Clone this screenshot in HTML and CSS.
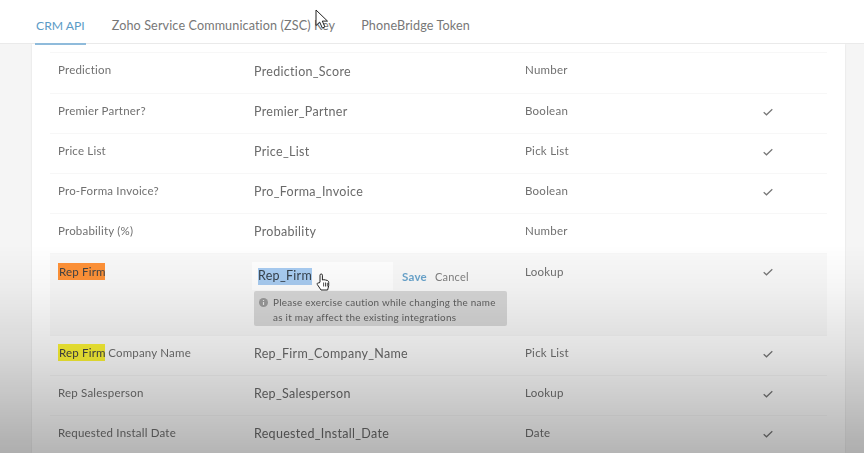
FILE: index.html
```html
<!DOCTYPE html>
<html lang="en">
<head>
<meta charset="utf-8">
<title>CRM API</title>
<link rel="stylesheet" href="styles.css">
</head>
<body>
<div class="page">
  <nav class="tabs">
    <a class="tab active">CRM API</a>
    <a class="tab">Zoho Service Communication (ZSC) Key</a>
    <a class="tab">PhoneBridge Token</a>
  </nav>
  <main class="card">
    <div class="table">
      <div class="row"><span class="label">Prediction</span><span class="api">Prediction_Score</span><span class="type">Number</span><span class="check"></span></div>
      <div class="row"><span class="label">Premier Partner?</span><span class="api">Premier_Partner</span><span class="type">Boolean</span><span class="check"><svg class="tick" viewBox="0 0 10 8"><path d="M.7 4.2 3.5 6.8 9.3 1.2"/></svg></span></div>
      <div class="row"><span class="label">Price List</span><span class="api">Price_List</span><span class="type">Pick List</span><span class="check"><svg class="tick" viewBox="0 0 10 8"><path d="M.7 4.2 3.5 6.8 9.3 1.2"/></svg></span></div>
      <div class="row"><span class="label">Pro-Forma Invoice?</span><span class="api">Pro_Forma_Invoice</span><span class="type">Boolean</span><span class="check"><svg class="tick" viewBox="0 0 10 8"><path d="M.7 4.2 3.5 6.8 9.3 1.2"/></svg></span></div>
      <div class="row"><span class="label">Probability (%)</span><span class="api">Probability</span><span class="type">Number</span><span class="check"></span></div>
      <div class="row editing">
        <span class="label"><mark class="hl-orange">Rep Firm</mark></span>
        <div class="editor">
          <div class="edit-line">
            <div class="input"><span class="selected">Rep_Firm</span></div>
            <a class="save">Save</a><a class="cancel">Cancel</a>
          </div>
          <div class="note">
            <svg class="info" viewBox="0 0 10 10"><circle cx="5" cy="5" r="5"/><path d="M5 2.2v1.2M5 4.500v3.300"/></svg>
            <p>Please exercise caution while changing the name<br>as it may affect the existing integrations</p>
          </div>
        </div>
        <span class="type">Lookup</span>
        <span class="check"><svg class="tick" viewBox="0 0 10 8"><path d="M.7 4.2 3.5 6.8 9.3 1.2"/></svg></span>
      </div>
      <div class="row"><span class="label"><mark class="hl-yellow">Rep Firm</mark> Company Name</span><span class="api">Rep_Firm_Company_Name</span><span class="type">Pick List</span><span class="check"><svg class="tick" viewBox="0 0 10 8"><path d="M.7 4.2 3.5 6.8 9.3 1.2"/></svg></span></div>
      <div class="row"><span class="label">Rep Salesperson</span><span class="api">Rep_Salesperson</span><span class="type">Lookup</span><span class="check"><svg class="tick" viewBox="0 0 10 8"><path d="M.7 4.2 3.5 6.8 9.3 1.2"/></svg></span></div>
      <div class="row"><span class="label">Requested Install Date</span><span class="api">Requested_Install_Date</span><span class="type">Date</span><span class="check"><svg class="tick" viewBox="0 0 10 8"><path d="M.7 4.2 3.5 6.8 9.3 1.2"/></svg></span></div>
    </div>
  </main>
  <div class="shade"></div>
  <svg class="cursor-arrow" viewBox="0 0 14 20"><path d="M1 1v15.500l3.700-3.400 2.600 5.900 2.600-1.100-2.600-5.800h5.200z"/></svg>
  <svg class="cursor-hand" viewBox="0 0 14 18"><path d="M4 9V2.200a1.200 1.200 0 0 1 2.400 0V7l1.500-.3 1.600.3 1.600.4c1 .3 1.600 1 1.600 2v3.400L11.600 17H5L1.300 11.500c-.7-1.200.9-2.300 1.800-1.300z"/><path class="fingers" d="M7.600 9.500v4M9.500 9.500v4M11.300 9.800v3.700"/></svg>
</div>
</body>
</html>
```

FILE: styles.css
```css
* { box-sizing: border-box; }
html, body { margin: 0; padding: 0; }
body { background: #f5f5f5; font-family: Lato, "Noto Sans", sans-serif; color: #6a6a6a; overflow: hidden; }
.page { position: relative; width: 864px; height: 453px; overflow: hidden; filter: blur(0.45px); }
.tabs { display: flex; gap: 26px; height: 44px; padding-left: 35px; background: #fff; border-bottom: 1px solid #eaeaea; position: relative; z-index: 1; }
.tab { font-size: 12.6px; line-height: 51px; height: 45px; letter-spacing: .12px; color: #777; }
.tab.active { color: #5b9bc6; border-bottom: 2px solid #8fbbdb; padding: 0 1px; font-size: 12.2px; letter-spacing: 0; }
.card { margin: 0 19px 0 32px; padding: 8px 18px 0; background: #fff; height: 409px; box-shadow: 0 0 2px rgba(0,0,0,.1); }
.row { display: grid; grid-template-columns: 196px 271px 228px 30px; height: 40px; align-items: center; padding: 0 0 4px 8px; border-top: 1px solid #f7f7f7; }
.row:first-child { height: 41px; }
.label { font-size: 11.5px; letter-spacing: .2px; color: #707070; margin-top: -3px; }
.api { font-size: 12.5px; letter-spacing: .3px; color: #6a6a6a; }
.type { font-size: 11.5px; letter-spacing: .25px; color: #707070; margin-top: -3px; }
.check { display: flex; justify-content: center; }
.tick { width: 10px; height: 8px; fill: none; stroke: #777; stroke-width: 1.2; }
.editing { height: 82px; align-items: start; background: #f9f9f9; padding: 8px 0 0 8px; }
.editing .label { margin-top: 1px; }
.editing .type { margin-top: 3px; }
.editing .check { margin-top: 6px; }
.hl-orange, .hl-yellow { display: inline-block; color: #444; padding: 0 0 0 1px; line-height: 17px; width: 47px; white-space: nowrap; }
.hl-orange { background: #ff9238; }
.hl-yellow { background: #fdf536; }
.editor { display: flex; flex-direction: column; margin-left: -2px; }
.edit-line { display: flex; align-items: center; height: 28px; }
.input { display: flex; width: 141px; height: 28px; background: #fff; padding: 6px 0 0 6px; }
.selected { width: 54px; height: 17px; line-height: 16px; background: #a9cdf2; color: #36414c; font-size: 12.5px; letter-spacing: .3px; }
.save { margin-left: 9px; font-size: 11.5px; color: #6aa5cd; font-weight: 700; letter-spacing: .25px; }
.cancel { margin-left: 8px; font-size: 11px; color: #808080; letter-spacing: .2px; }
.note { display: flex; gap: 5px; width: 253px; height: 35px; margin: 1px 0 0 2px; padding: 4px 0 0 5px; background: #d8d8d8; border-radius: 2px; }
.note p { margin: 0; font-size: 9.9px; line-height: 14.5px; letter-spacing: .27px; color: #606060; }
.info { width: 9px; height: 9px; margin-top: 3px; flex: none; }
.info circle { fill: #9a9a9a; }
.info path { stroke: #e8e8e8; stroke-width: 1.3; fill: none; }
.shade { position: absolute; left: 0; right: 0; top: 0; bottom: 0; pointer-events: none; z-index: 2; background: linear-gradient(to bottom, rgba(0,0,0,0) 54%, rgba(0,0,0,.04) 64%, rgba(0,0,0,.12) 78%, rgba(0,0,0,.29) 100%); }
.cursor-arrow { position: absolute; z-index: 3; left: 315px; top: 9px; width: 14px; height: 20px; fill: #fff; stroke: #222; stroke-width: 1; }
.cursor-hand { position: absolute; z-index: 3; left: 316px; top: 273px; width: 14px; height: 18px; fill: #fff; stroke: #222; stroke-width: 1; stroke-linejoin: round; }
.fingers { fill: none; stroke-width: .8; }
```
